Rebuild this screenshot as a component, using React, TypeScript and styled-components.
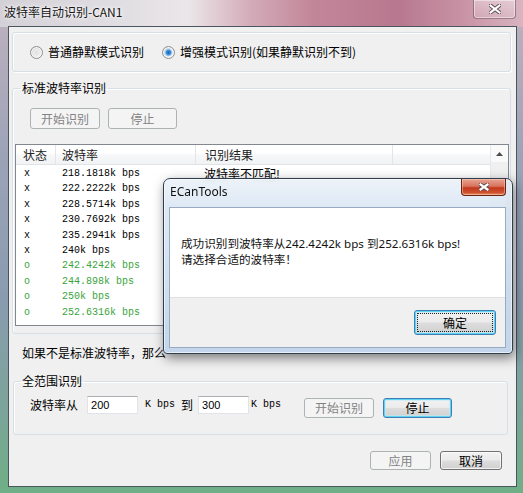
import React from "react";
import styled, { createGlobalStyle, css } from "styled-components";

const uiFont = `"Noto Sans CJK SC", "Noto Sans", sans-serif`;
const monoFont = `"Liberation Mono", "Noto Sans CJK SC", monospace`;

const GlobalStyle = createGlobalStyle`
  html, body { margin: 0; padding: 0; }
  body {
    width: 523px;
    height: 493px;
    overflow: hidden;
    font-family: ${uiFont};
    font-size: 12px;
    color: #000;
  }
`;

const Window = styled.div`
  position: relative;
  width: 523px;
  height: 493px;
  box-sizing: border-box;
  display: flex;
  flex-direction: column;
  background:
    linear-gradient(90deg, #d3d0d7 0%, #e3e0e4 26%, #ebe6e9 36%, #d3abb8 48%, #c28699 60%, #b8788f 76%, #c994a6 89%, #d8b4c0 100%) top left / 100% 27px no-repeat,
    linear-gradient(180deg, #c0b2bf 0%, #9ca3b7 32%, #8a9bb0 60%, #7aa597 85%, #6faf86 100%);
`;

const TitleBar = styled.div`
  height: 26px;
  display: flex;
  align-items: flex-start;
  justify-content: space-between;
  padding-left: 4px;
`;

const TitleText = styled.div`
  margin-top: 4px;
  line-height: 16px;
  color: #151515;
  text-shadow: 0 0 6px #fff, 0 0 3px #fff;
`;

const CaptionClose = styled.div`
  width: 43px;
  height: 19px;
  margin-right: 7px;
  box-sizing: border-box;
  display: flex;
  align-items: center;
  justify-content: center;
  border: 1px solid rgba(95, 60, 80, 0.55);
  border-top: none;
  border-radius: 0 0 4px 4px;
  background: linear-gradient(180deg, rgba(255, 255, 255, 0.35), rgba(255, 255, 255, 0.12));
  box-shadow: inset 0 0 0 1px rgba(255, 255, 255, 0.45);
`;

const Client = styled.div`
  flex: 1;
  margin: 0 6px 6px 8px;
  padding: 5px 5px 0 3px;
  border: 1px solid #4b5560;
  background: #f0f0f0;
  display: flex;
  flex-direction: column;
`;

const ModeBox = styled.div`
  height: 40px;
  box-sizing: border-box;
  display: flex;
  align-items: center;
  gap: 18px;
  padding-left: 17px;
  border: 1px solid #d5dfe5;
  border-radius: 3px;
  box-shadow: inset 1px 1px 0 #fff, 1px 1px 0 #fff;
`;

const RadioOption = styled.label`
  display: inline-flex;
  align-items: center;
  gap: 5px;
  line-height: 16px;
`;

const RadioDot = styled.span<{ $checked?: boolean }>`
  width: 13px;
  height: 13px;
  box-sizing: border-box;
  border-radius: 50%;
  border: 1px solid #8e8f8f;
  box-shadow: inset 0 0 0 1px #f7f7f7;
  background: ${({ $checked }) =>
    $checked
      ? "radial-gradient(circle, #1d5fae 0, #3f8fe0 2.2px, #9fd0f6 3.4px, transparent 4.2px), linear-gradient(135deg, #cfcfcf, #fbfbfb)"
      : "radial-gradient(circle, #dedede 0, #ececec 3px, transparent 4.5px), linear-gradient(135deg, #cdcdcd, #fbfbfb)"};
`;

const GroupBox = styled.fieldset<{ $inset?: number; $top?: number }>`
  margin: ${({ $top }) => $top ?? 8}px ${({ $inset }) => ($inset ? 3 : 0)}px 0 ${({ $inset }) => $inset || 0}px;
  padding: 0 1px 7px 2px;
  min-width: 0;
  border: 1px solid #d5dfe5;
  border-radius: 3px;
  box-shadow: inset 1px 1px 0 #fff;
`;

const Legend = styled.legend<{ $shift: number }>`
  margin-left: ${({ $shift }) => $shift}px;
  padding: 0 2px;
  line-height: 16px;
`;

const ButtonRow = styled.div`
  display: flex;
  gap: 8px;
  margin: 12px 0 0 15px;
`;

type Tone = "normal" | "default" | "disabled";

const Btn = styled.button<{ $w: number; $h?: number; $tone?: Tone; $focus?: boolean }>`
  width: ${({ $w }) => $w}px;
  height: ${({ $h }) => $h || 21}px;
  box-sizing: border-box;
  padding: 0;
  font-family: ${uiFont};
  font-size: 12px;
  line-height: 14px;
  color: #000;
  border-radius: 3px;
  border: 1px solid #707070;
  background: linear-gradient(180deg, #f2f2f2 0%, #ebebeb 48%, #dddddd 52%, #cfcfcf 100%);
  box-shadow: inset 0 0 0 1px rgba(255, 255, 255, 0.7);
  ${({ $tone }) =>
    $tone === "default" &&
    css`
      border-color: #3c7fb1;
      box-shadow: inset 0 0 0 1px #5fd2f5, inset 0 0 0 2px rgba(190, 235, 250, 0.6);
    `}
  ${({ $tone }) =>
    $tone === "disabled" &&
    css`
      border-color: #adb2b5;
      background: #f4f4f4;
      box-shadow: none;
      color: #838383;
    `}
  ${({ $focus }) =>
    $focus &&
    css`
      outline: 1px dotted #222;
      outline-offset: -4px;
    `}
`;

const ListView = styled.div`
  margin: 15px 0 0 0;
  height: 182px;
  box-sizing: border-box;
  border: 1px solid #828790;
  background: #fff;
  display: flex;
  overflow: hidden;
`;

const ListMain = styled.div`
  flex: 1;
  display: flex;
  flex-direction: column;
`;

const columns = "40px 140px 197px 1fr";

const HeaderRow = styled.div`
  display: grid;
  grid-template-columns: ${columns};
  height: 20px;
  box-sizing: border-box;
  border-bottom: 1px solid #e1e3e6;
  background: linear-gradient(180deg, #ffffff 0%, #ffffff 50%, #f7f8f9 50%, #f2f3f5 100%);
  margin-bottom: 1px;
`;

const HeaderCell = styled.div<{ $pad: number }>`
  padding-left: ${({ $pad }) => $pad}px;
  line-height: 19px;
  color: #222;
  border-right: 1px solid #e5e5e5;
  &:last-child { border-right: none; }
`;

const Row = styled.div`
  display: grid;
  grid-template-columns: ${columns};
  height: 15.4px;
  line-height: 15.4px;
`;

const Cell = styled.div<{ $ok?: boolean; $mono?: boolean; $pad: number }>`
  padding-left: ${({ $pad }) => $pad}px;
  white-space: nowrap;
  color: ${({ $ok }) => ($ok ? "#3aa43c" : "#000")};
  font-family: ${({ $mono }) => ($mono ? monoFont : uiFont)};
  font-size: ${({ $mono }) => ($mono ? "10px" : "12px")};
`;

const ScrollBar = styled.div`
  width: 17px;
  background: #f0f0f0;
  border-left: 1px solid #e8e8e8;
`;

const ScrollArrow = styled.div`
  height: 17px;
  display: flex;
  align-items: center;
  justify-content: center;
  background: #fafafa;
`;

const Note = styled.div`
  margin-top: 11px;
  padding-left: 10px;
  line-height: 16px;
`;

const RangeRow = styled.div`
  display: flex;
  align-items: flex-start;
  margin-top: 7px;
  padding: 0 0 9px 14px;
`;

const RangeText = styled.span<{ $gap?: number }>`
  margin-left: ${({ $gap }) => $gap || 0}px;
  line-height: 18px;
`;

const Unit = styled.span<{ $gap: number }>`
  margin-left: ${({ $gap }) => $gap}px;
  font-family: ${monoFont};
  font-size: 10px;
  line-height: 18px;
  white-space: pre;
`;

const Field = styled.input<{ $gap: number }>`
  width: 51px;
  height: 18px;
  box-sizing: border-box;
  margin: 0 0 0 ${({ $gap }) => $gap}px;
  padding: 0 3px;
  border: 1px solid #e2e3ea;
  border-top-color: #abadb3;
  background: #fff;
  font-family: "Liberation Sans", sans-serif;
  font-size: 11px;
  color: #000;
`;

const RangeButton = styled(Btn)<{ $gap: number }>`
  margin: 2px 0 0 ${({ $gap }) => $gap}px;
`;

const Footer = styled.div`
  display: flex;
  justify-content: flex-end;
  gap: 9px;
  margin-top: 16px;
  padding-right: 9px;
`;

const Dialog = styled.div`
  position: absolute;
  left: 163px;
  top: 178px;
  width: 350px;
  height: 176px;
  box-sizing: border-box;
  display: flex;
  flex-direction: column;
  padding: 0 6px 5px 5px;
  border: 1px solid #2f3d4e;
  border-radius: 7px 7px 4px 4px;
  background: linear-gradient(180deg, rgba(232, 239, 247, 0.78) 0%, rgba(214, 228, 243, 0.85) 18%, rgba(190, 211, 234, 0.92) 100%);
  backdrop-filter: blur(2px);
  box-shadow: inset 0 0 0 1px rgba(255, 255, 255, 0.6), 2px 4px 12px rgba(0, 0, 0, 0.5);
`;

const DialogTitleBar = styled.div`
  height: 28px;
  display: flex;
  align-items: flex-start;
  justify-content: space-between;
`;

const DialogTitle = styled.div`
  margin-top: 5px;
  padding-left: 1px;
  line-height: 16px;
  font-family: "Noto Sans", sans-serif;
  font-size: 12px;
  color: #111;
`;

const DialogClose = styled.div`
  width: 45px;
  height: 17px;
  box-sizing: border-box;
  display: flex;
  align-items: center;
  justify-content: center;
  border: 1px solid #6b2213;
  border-top: none;
  border-radius: 0 0 4px 4px;
  background: linear-gradient(180deg, #e8a493 0%, #d9745e 45%, #c3391d 55%, #cf5230 85%, #e49a6d 100%);
  box-shadow: inset 0 0 0 1px rgba(255, 220, 200, 0.45);
`;

const DialogBody = styled.div`
  flex: 1;
  display: flex;
  flex-direction: column;
  border: 1px solid #98aabf;
  background: #fff;
`;

const Message = styled.div`
  flex: 1;
  padding: 28px 0 0 11px;
  line-height: 16px;
  font-family: "Noto Sans", "Noto Sans CJK SC", sans-serif;
  font-size: 11.6px;
  color: #111;
`;

const DialogButtons = styled.div`
  height: 50px;
  box-sizing: border-box;
  display: flex;
  justify-content: flex-end;
  align-items: flex-start;
  padding: 12px 9px 0 0;
  border-top: 1px solid #dfdfdf;
  background: #f0f0f0;
`;

const CloseGlyph = ({ w, h }: { w: number; h: number }) => (
  <svg width={w} height={h} viewBox={`0 0 ${w} ${h}`}>
    <path d={`M1.5 1.5 L${w - 1.5} ${h - 1.5} M${w - 1.5} 1.5 L1.5 ${h - 1.5}`} stroke="#5a4a55" strokeWidth="4" strokeLinecap="square" />
    <path d={`M1.5 1.5 L${w - 1.5} ${h - 1.5} M${w - 1.5} 1.5 L1.5 ${h - 1.5}`} stroke="#fff" strokeWidth="2.2" strokeLinecap="square" />
  </svg>
);

// only the first result is visible; the others sit under the message box
const rows = [
  { ok: false, rate: "218.1818k bps", result: "波特率不匹配!" },
  { ok: false, rate: "222.2222k bps", result: "" },
  { ok: false, rate: "228.5714k bps", result: "" },
  { ok: false, rate: "230.7692k bps", result: "" },
  { ok: false, rate: "235.2941k bps", result: "" },
  { ok: false, rate: "240k bps", result: "" },
  { ok: true, rate: "242.4242k bps", result: "" },
  { ok: true, rate: "244.898k bps", result: "" },
  { ok: true, rate: "250k bps", result: "" },
  { ok: true, rate: "252.6316k bps", result: "" },
];

const App = () => (
  <Window>
    <GlobalStyle />
    <TitleBar>
      <TitleText>波特率自动识别-CAN1</TitleText>
      <CaptionClose>
        <CloseGlyph w={12} h={10} />
      </CaptionClose>
    </TitleBar>

    <Client>
      <ModeBox>
        <RadioOption>
          <RadioDot />
          普通静默模式识别
        </RadioOption>
        <RadioOption>
          <RadioDot $checked />
          增强模式识别(如果静默识别不到)
        </RadioOption>
      </ModeBox>

      <GroupBox>
        <Legend $shift={5}>标准波特率识别</Legend>
        <ButtonRow>
          <Btn $w={70} $tone="disabled" disabled>开始识别</Btn>
          <Btn $w={69} $tone="disabled" disabled>停止</Btn>
        </ButtonRow>
        <ListView>
          <ListMain>
            <HeaderRow>
              <HeaderCell $pad={7}>状态</HeaderCell>
              <HeaderCell $pad={6}>波特率</HeaderCell>
              <HeaderCell $pad={9}>识别结果</HeaderCell>
              <HeaderCell $pad={0} />
            </HeaderRow>
            {rows.map((r) => (
              <Row key={r.rate}>
                <Cell $pad={8} $mono $ok={r.ok}>{r.ok ? "o" : "x"}</Cell>
                <Cell $pad={6} $mono $ok={r.ok}>{r.rate}</Cell>
                <Cell $pad={8} $ok={r.ok}>{r.result}</Cell>
                <Cell $pad={0} />
              </Row>
            ))}
          </ListMain>
          <ScrollBar>
            <ScrollArrow>
              <svg width="7" height="4" viewBox="0 0 7 4">
                <path d="M0 4 L3.5 0 L7 4 Z" fill="#4d4d4d" />
              </svg>
            </ScrollArrow>
          </ScrollBar>
        </ListView>
      </GroupBox>

      <Note>如果不是标准波特率，那么</Note>

      <GroupBox $inset={1} $top={12}>
        <Legend $shift={4}>全范围识别</Legend>
        <RangeRow>
          <RangeText>波特率从</RangeText>
          <Field $gap={9} defaultValue="200" />
          <Unit $gap={7}>K bps </Unit>
          <RangeText>到</RangeText>
          <Field $gap={5} defaultValue="300" />
          <Unit $gap={2}>K bps</Unit>
          <RangeButton $gap={23} $w={70} $h={20} $tone="disabled" disabled>开始识别</RangeButton>
          <RangeButton $gap={9} $w={69} $h={20} $tone="default">停止</RangeButton>
        </RangeRow>
      </GroupBox>

      <Footer>
        <Btn $w={61} $h={19} $tone="disabled" disabled>应用</Btn>
        <Btn $w={62} $h={19}>取消</Btn>
      </Footer>
    </Client>

    <Dialog>
      <DialogTitleBar>
        <DialogTitle>ECanTools</DialogTitle>
        <DialogClose>
          <CloseGlyph w={10} h={8} />
        </DialogClose>
      </DialogTitleBar>
      <DialogBody>
        <Message>
          成功识别到波特率从242.4242k bps 到252.6316k bps!
          <br />
          请选择合适的波特率！
        </Message>
        <DialogButtons>
          <Btn $w={82} $h={25} $tone="default" $focus>确定</Btn>
        </DialogButtons>
      </DialogBody>
    </Dialog>
  </Window>
);

export default App;
